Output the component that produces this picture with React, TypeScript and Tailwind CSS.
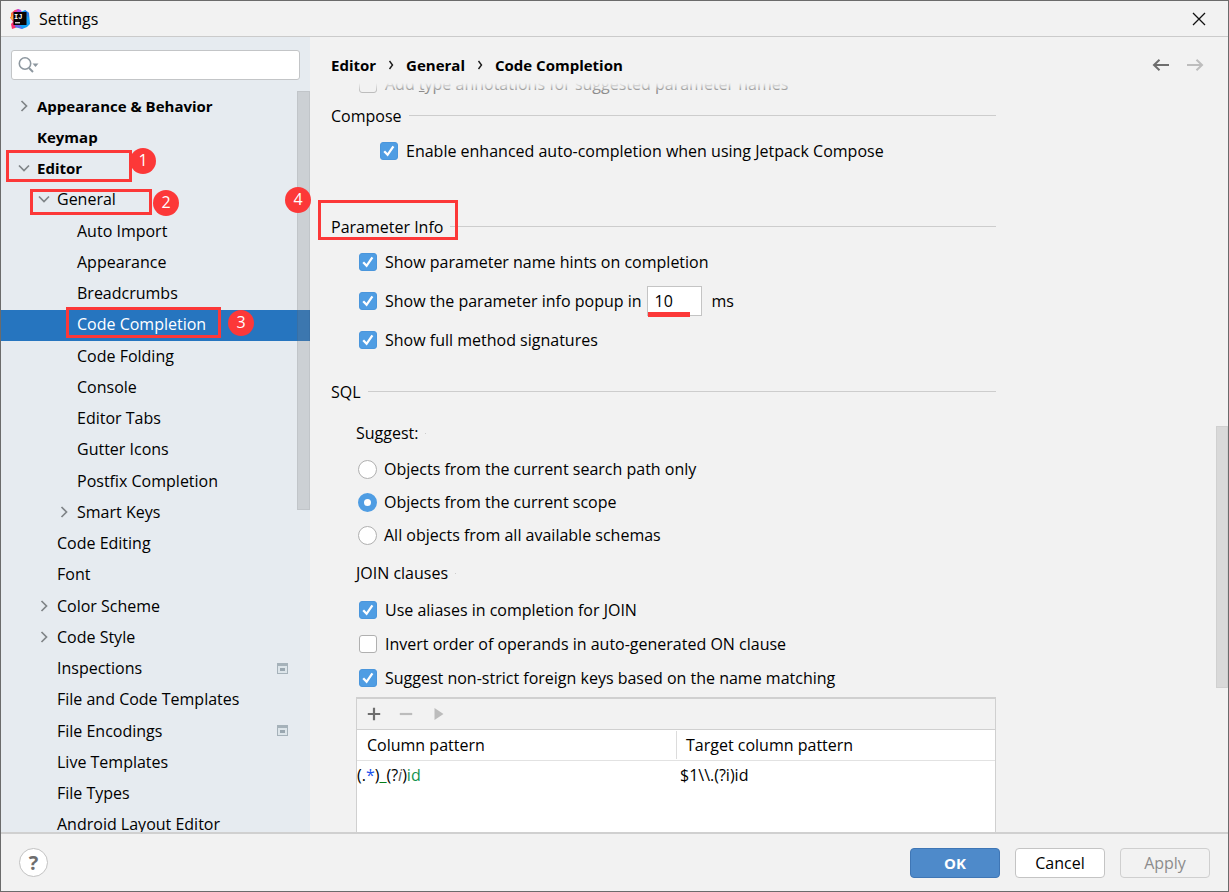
import { useState, type ReactNode } from 'react';
import clsx from 'clsx';

interface TreeItem {
  label: string;
  level: 0 | 1 | 2;
  arrow?: 'open' | 'closed';
  projectScope?: boolean;
}

const TREE: TreeItem[] = [
  { label: 'Appearance & Behavior', level: 0, arrow: 'closed' },
  { label: 'Keymap', level: 0 },
  { label: 'Editor', level: 0, arrow: 'open' },
  { label: 'General', level: 1, arrow: 'open' },
  { label: 'Auto Import', level: 2 },
  { label: 'Appearance', level: 2 },
  { label: 'Breadcrumbs', level: 2 },
  { label: 'Code Completion', level: 2 },
  { label: 'Code Folding', level: 2 },
  { label: 'Console', level: 2 },
  { label: 'Editor Tabs', level: 2 },
  { label: 'Gutter Icons', level: 2 },
  { label: 'Postfix Completion', level: 2 },
  { label: 'Smart Keys', level: 2, arrow: 'closed' },
  { label: 'Code Editing', level: 1 },
  { label: 'Font', level: 1 },
  { label: 'Color Scheme', level: 1, arrow: 'closed' },
  { label: 'Code Style', level: 1, arrow: 'closed' },
  { label: 'Inspections', level: 1, projectScope: true },
  { label: 'File and Code Templates', level: 1 },
  { label: 'File Encodings', level: 1, projectScope: true },
  { label: 'Live Templates', level: 1 },
  { label: 'File Types', level: 1 },
  { label: 'Android Layout Editor', level: 1 },
];

const INDENT = { 0: 'pl-[15px]', 1: 'pl-[35px]', 2: 'pl-[55px]' };

// numbered callouts drawn over the dialog
const CALLOUTS = [
  { n: 1, box: 'left-[5px] top-[149px] h-8 w-[126px]', dot: 'left-[129px] top-[147px]' },
  { n: 2, box: 'left-[29px] top-[188px] h-[26px] w-[122px]', dot: 'left-[152px] top-[189px]' },
  { n: 3, box: 'left-[65px] top-[306px] h-[31px] w-[155px]', dot: 'left-[227px] top-[309px]' },
  { n: 4, box: 'left-[317px] top-[199px] h-[40px] w-[140px]', dot: 'left-[284px] top-[186px]' },
];

function IdeaLogo() {
  return (
    <svg viewBox="0 0 20 20" className="size-5" aria-hidden="true">
      <path d="M1 4 L5 1 L11 3 L10 10 L1 9Z" fill="#ff7a2f" />
      <path d="M5 1 L8 0 L12 3 L4 5 L2 4Z" fill="#fb3f8c" />
      <path d="M8 0 L11 1 L12 4 L6 4Z" fill="#b04be0" />
      <path d="M0 8 L5 7 L8 18 L2 20 L1 15 L3 13Z" fill="#fe2b6f" />
      <path d="M0 9 L3 6 L4 12Z" fill="#fdb13b" />
      <path d="M11 3 L15 1 L19 4 L20 15 L17 18 L12 20 L5 18Z" fill="#12a0f5" />
      <path d="M15 1 L19 4 L19 9 L14 4Z" fill="#2b7de9" />
      <path d="M4 16 L9 16 L13 20 L7 18Z" fill="#7a5be8" />
      <rect x="3.5" y="3" width="13" height="13" fill="#080405" />
      <text x="4" y="9.8" fontSize="7" fontWeight="700" fill="#fff" fontFamily="Liberation Mono, monospace">
        IJ
      </text>
      <rect x="5" y="13.2" width="5" height="1.2" fill="#fff" />
    </svg>
  );
}

function TreeArrow({ open }: { open: boolean }) {
  return (
    <svg viewBox="0 0 16 16" className="size-4 shrink-0" fill="none" stroke="#7f8487" strokeWidth="1.7" aria-hidden="true">
      <path d={open ? 'M3 5.5 L8 10.5 L13 5.5' : 'M5.5 3 L10.5 8 L5.5 13'} />
    </svg>
  );
}

function ProjectIcon() {
  return (
    <svg viewBox="0 0 11 11" className="h-[11px] w-[11px]" aria-hidden="true">
      <rect x="0.5" y="0.5" width="10" height="10" fill="#dde5ea" stroke="#a6b2ba" />
      <rect width="11" height="3" fill="#a6b2ba" />
      <rect x="3" y="5" width="5" height="3" fill="#9aa7b0" />
    </svg>
  );
}

function Check({
  children,
  checked = false,
  disabled,
}: {
  children: ReactNode;
  checked?: boolean;
  disabled?: boolean;
}) {
  const [on, setOn] = useState(checked);
  return (
    <label className={clsx('flex h-6 w-fit items-center gap-2', disabled && 'text-[#8c8c8c]')}>
      <span className="grid size-[18px] place-items-center">
        <input
          type="checkbox"
          checked={on}
          disabled={disabled}
          onChange={() => setOn(!on)}
          className="col-start-1 row-start-1 size-[18px] appearance-none rounded-[3px] border border-[#b0b0b0] bg-white checked:border-[#4a96dc] checked:bg-[#4f9de3] disabled:border-[#bdbdbd] disabled:bg-[#f2f2f2]"
        />
        {on && (
          <svg viewBox="0 0 18 18" className="pointer-events-none col-start-1 row-start-1 size-[18px]" fill="none" stroke="#fff" strokeWidth="2.3" aria-hidden="true">
            <path d="M4.2 9.2 L7.6 12.8 L13.4 4.4" />
          </svg>
        )}
      </span>
      <span>{children}</span>
    </label>
  );
}

function Radio({ label, value, scope, onPick }: { label: string; value: string; scope: string; onPick: (v: string) => void }) {
  return (
    <label className="flex h-6 w-fit items-center gap-[7px]">
      <input
        type="radio"
        name="suggest"
        value={value}
        checked={scope === value}
        onChange={() => onPick(value)}
        className="size-[19px] appearance-none rounded-full border border-[#b0b0b0] bg-white checked:border-[6px] checked:border-[#4f9de3]"
      />
      <span>{label}</span>
    </label>
  );
}

function SectionTitle({ children }: { children: ReactNode }) {
  return (
    <h2 className="flex h-6 items-center gap-[7px]">
      <span className="pt-[2px]">{children}</span>
      <span className="h-px flex-1 bg-[#cdcdcd]" />
    </h2>
  );
}

function GroupTitle({ children }: { children: ReactNode }) {
  return (
    <h3 className="flex h-6 items-center gap-[7px]">
      {children}
      <span className="h-px w-px bg-[#cdcdcd]" />
    </h3>
  );
}

function Sidebar() {
  const [selected, setSelected] = useState('Code Completion');
  return (
    <aside className="flex w-[309px] shrink-0 flex-col bg-[#e6ebf0]">
      <div className="mx-[10px] mt-[13px] mb-[11px] flex h-[30px] items-center rounded-[3px] border border-[#c3c5c7] bg-white pl-[6px]">
        <svg viewBox="0 0 22 18" className="h-[18px] w-[22px]" aria-hidden="true">
          <circle cx="7" cy="7.5" r="5.7" fill="none" stroke="#8d979f" strokeWidth="1.6" />
          <path d="M11 12 L15 16" stroke="#8d979f" strokeWidth="2" />
          <path d="M14.5 7.5 H20.5 L17.5 11Z" fill="#8d979f" />
        </svg>
        <input type="search" aria-label="Search settings" className="min-w-0 flex-1 bg-transparent outline-none" />
      </div>
      <div className="relative min-h-0 flex-1 overflow-hidden">
        <ul className="grid h-[750px] auto-rows-fr">
          {TREE.map((item) => (
            <li key={item.label} className="flex">
              <button
                type="button"
                onClick={() => setSelected(item.label)}
                className={clsx(
                  'flex flex-1 items-center pr-[22px] pb-[2px] text-left',
                  INDENT[item.level],
                  item.level === 0 && 'text-[15px] font-bold',
                  item.label === selected && 'bg-[#2675bf] text-white',
                )}
              >
                {item.arrow ? <TreeArrow open={item.arrow === 'open'} /> : <span className="w-4" />}
                <span className="flex-1 pl-[5px]">{item.label}</span>
                {item.projectScope && <ProjectIcon />}
              </button>
            </li>
          ))}
        </ul>
        <div className="absolute top-0 right-0 h-[419px] w-[13px] border border-black/5 bg-[#808080]/25" />
      </div>
    </aside>
  );
}

function PatternTable() {
  return (
    <div className="mt-[7px] border border-t-2 border-[#d0d0d0] bg-white">
      <div className="flex h-[30px] items-center gap-4 bg-[#f2f2f2] pl-[9px]">
        <button type="button" aria-label="Add">
          <svg viewBox="0 0 16 16" className="size-4" stroke="#6e6e6e" strokeWidth="2.2">
            <path d="M8 1.8 V14.2 M1.8 8 H14.2" />
          </svg>
        </button>
        <button type="button" aria-label="Remove" disabled>
          <svg viewBox="0 0 16 16" className="size-4" stroke="#bcbcbc" strokeWidth="2.2">
            <path d="M1.8 8 H14.2" />
          </svg>
        </button>
        <button type="button" aria-label="Run" disabled>
          <svg viewBox="0 0 16 16" className="size-4" fill="#bcbcbc">
            <path d="M4.5 2 L13.5 8 L4.5 14Z" />
          </svg>
        </button>
      </div>
      <table className="mb-12 w-full table-fixed border-t border-[#d0d0d0] text-left">
        <thead>
          <tr className="h-[31px] border-b border-[#e2e2e2]">
            <th className="py-px pl-[10px] font-normal">Column pattern</th>
            <th className="py-px font-normal">
              <span className="flex h-7 items-center border-l border-[#dcdcdc] pl-[9px]">Target column pattern</span>
            </th>
          </tr>
        </thead>
        <tbody>
          <tr className="h-7">
            <td>
              (.<span className="text-[#1750eb]">*</span>)<span className="text-[#067d17]">_</span>(?
              <i className="text-[#5c5c5c]">i</i>)<span className="text-[#12924f]">id</span>
            </td>
            <td className="pl-1">$1\\.(?i)id</td>
          </tr>
        </tbody>
      </table>
    </div>
  );
}

function CompletionPage() {
  const [scope, setScope] = useState('scope');
  const [delay, setDelay] = useState('10');
  return (
    <main className="relative flex min-w-0 flex-1 flex-col">
      <header className="flex h-[46px] shrink-0 items-center justify-between pt-[10px] pr-6 pl-[21px]">
        <nav aria-label="Breadcrumb" className="flex items-center gap-[11px] text-[15px] font-bold">
          <a href="#editor">Editor</a>
          <Chevron />
          <a href="#general">General</a>
          <Chevron />
          <span>Code Completion</span>
        </nav>
        <div className="flex gap-4">
          <button type="button" aria-label="Back">
            <HistoryArrow color="#6e6e6e" path="M17 9 H2 M7.5 3.8 L2 9 L7.5 14.2" />
          </button>
          <button type="button" aria-label="Forward" disabled>
            <HistoryArrow color="#bdbdbd" path="M1 9 H16 M10.5 3.8 L16 9 L10.5 14.2" />
          </button>
        </div>
      </header>

      <div className="relative min-h-0 flex-1 overflow-hidden">
        <div className="-mt-[11px] mr-[232px] ml-[21px]">
          <div className="pl-7">
            <Check disabled>
              Add <u>t</u>ype annotations for suggested parameter names
            </Check>
          </div>

          <div className="mt-[7px]">
            <SectionTitle>Compose</SectionTitle>
          </div>
          <div className="mt-3 pl-[49px]">
            <Check checked>Enable enhanced auto-completion when using Jetpack Compose</Check>
          </div>

          <div className="mt-[51px]">
            <SectionTitle>Parameter Info</SectionTitle>
          </div>
          <div className="mt-3 flex flex-col gap-3 pl-7">
            <Check checked>Show parameter name hints on completion</Check>
            <div className="flex h-[30px] items-center">
              <Check checked>Show the parameter info popup in</Check>
              <span className="relative ml-[5px] flex">
                <input
                  aria-label="Popup delay in milliseconds"
                  value={delay}
                  onChange={(e) => setDelay(e.target.value)}
                  className="h-[30px] w-[55px] border border-[#c4c4c4] bg-white pl-[7px] outline-none"
                />
                <span className="absolute bottom-[-1px] left-px h-[5px] w-[42px] bg-[#fc3838]" />
              </span>
              <span className="ml-[10px]">ms</span>
            </div>
            <Check checked>Show full method signatures</Check>
          </div>

          <div className="mt-[27px]">
            <SectionTitle>SQL</SectionTitle>
          </div>
          <div className="pl-[25px]">
            <fieldset className="pt-[18px]">
              <GroupTitle>Suggest:</GroupTitle>
              <div className="mt-3 flex flex-col gap-[9px] pl-[2px]">
                <Radio label="Objects from the current search path only" value="path" scope={scope} onPick={setScope} />
                <Radio label="Objects from the current scope" value="scope" scope={scope} onPick={setScope} />
                <Radio label="All objects from all available schemas" value="all" scope={scope} onPick={setScope} />
              </div>
            </fieldset>
            <div className="mt-[14px]">
              <GroupTitle>JOIN clauses</GroupTitle>
              <div className="mt-[13px] flex flex-col gap-[10px] pl-[3px]">
                <Check checked>Use aliases in completion for JOIN</Check>
                <Check>Invert order of operands in auto-generated ON clause</Check>
                <Check checked>Suggest non-strict foreign keys based on the name matching</Check>
              </div>
            </div>
            <PatternTable />
          </div>
        </div>
        <div className="absolute inset-x-0 top-0 h-2 bg-linear-to-b from-[#f2f2f2] to-transparent" />
        <div className="absolute top-[343px] right-0 h-[262px] w-3 border border-[#d0d0d0] bg-[#d9d9d9]" />
      </div>
    </main>
  );
}

function Chevron() {
  return (
    <svg viewBox="0 0 6 10" className="mx-px h-[10px] w-[6px]" fill="none" stroke="#1a1a1a" strokeWidth="1.4" aria-hidden="true">
      <path d="M1.5 1 L4.5 5 L1.5 9" />
    </svg>
  );
}

function HistoryArrow({ color, path }: { color: string; path: string }) {
  return (
    <svg viewBox="0 0 18 18" className="size-[18px]" fill="none" stroke={color} strokeWidth="2" aria-hidden="true">
      <path d={path} />
    </svg>
  );
}

export default function App() {
  return (
    <div className="relative flex h-screen flex-col overflow-hidden border border-[#6b6b6b] bg-[#f2f2f2] font-['Open_Sans',sans-serif] text-base leading-6 text-black">
      <div className="flex h-9 shrink-0 items-center border-b border-[#cbcbcb] pr-[22px] pl-[9px]">
        <IdeaLogo />
        <h1 className="flex-1 pl-[9px]">Settings</h1>
        <button type="button" aria-label="Close">
          <svg viewBox="0 0 14 14" className="size-[14px]" stroke="#111" strokeWidth="1.3">
            <path d="M1 1 L13 13 M13 1 L1 13" />
          </svg>
        </button>
      </div>

      <div className="flex min-h-0 flex-1">
        <Sidebar />
        <CompletionPage />
      </div>

      <footer className="flex h-[59px] shrink-0 items-center gap-[15px] border-t-2 border-[#d0d0d0] pr-[18px] pl-[18px]">
        <button
          type="button"
          aria-label="Help"
          className="mr-auto size-[29px] rounded-full border border-[#c2c2c2] bg-white text-xl font-bold text-[#6e6e6e]"
        >
          ?
        </button>
        <button type="button" className="h-[30px] w-[90px] rounded-[4px] border border-[#3f76b5] bg-[#4e8aca] text-[15px] font-bold text-white">
          OK
        </button>
        <button type="button" className="h-[30px] w-[90px] rounded-[4px] border border-[#c4c4c4] bg-white">
          Cancel
        </button>
        <button type="button" disabled className="h-[30px] w-[90px] rounded-[4px] border border-[#cfcfcf] text-[#8c8c8c]">
          Apply
        </button>
      </footer>

      {CALLOUTS.map((c) => (
        <div key={c.n} className="pointer-events-none">
          <div className={clsx('absolute border-3 border-[#fc3838]', c.box)} />
          <div className={clsx('absolute flex size-[26px] items-center justify-center rounded-full bg-[#fc3838] pb-[3px] text-white', c.dot)}>
            {c.n}
          </div>
        </div>
      ))}
    </div>
  );
}
